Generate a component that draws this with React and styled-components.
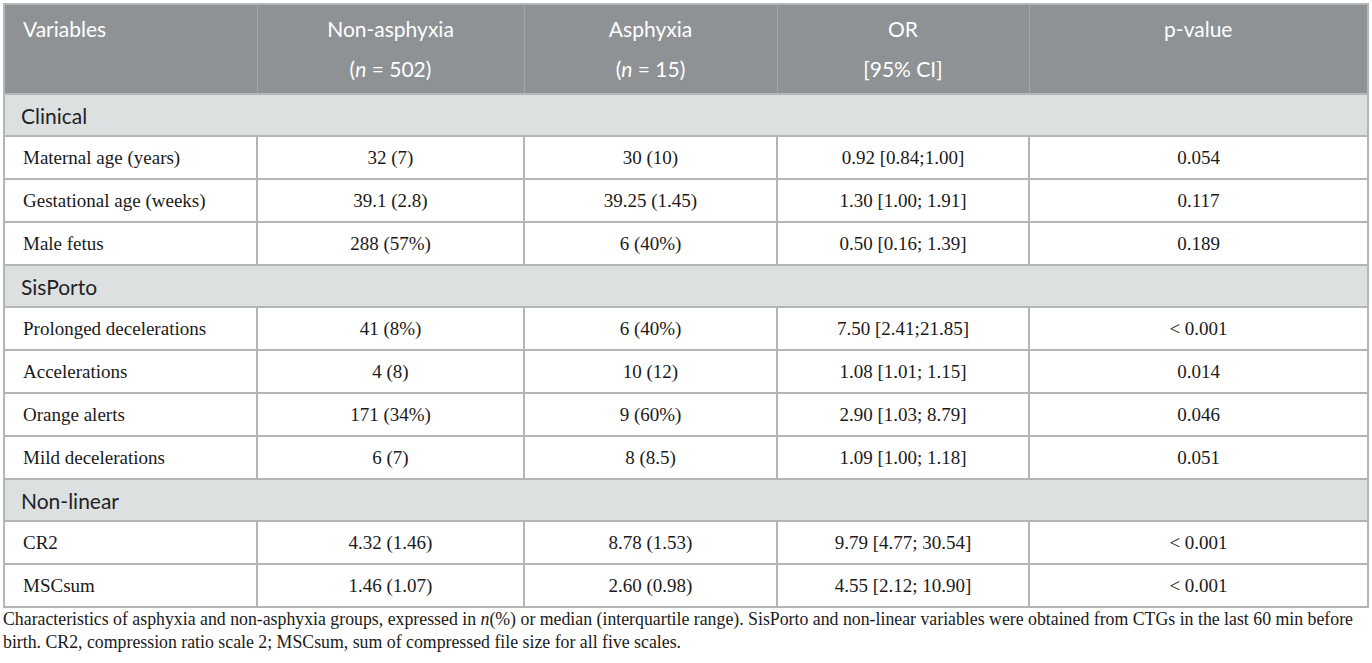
import React from "react";
import styled, { createGlobalStyle } from "styled-components";

const Global = createGlobalStyle`
  html, body { margin: 0; padding: 0; background: #ffffff; }
  body { width: 1372px; height: 663px; overflow: hidden; }
`;

const Page = styled.div`
  padding: 3px 5px 0 3px;
  display: flex;
  flex-direction: column;
`;

const Table = styled.table`
  border-collapse: collapse;
  table-layout: fixed;
  width: 1364px;
  border: 2px solid #b3b6b8;
`;

const HeadCell = styled.th`
  background: #8e9295;
  color: #ffffff;
  font-family: Lato, "Open Sans", sans-serif;
  font-weight: 400;
  font-size: 21px;
  line-height: 40px;
  padding: 4px 18px;
  text-align: ${(p) => (p.$left ? "left" : "center")};
  vertical-align: top;
  border-left: 1px solid #a3a7a9;
  height: 80px;
  &:first-child { border-left: none; }
`;

const SectionCell = styled.td`
  background: #dde0e1;
  color: #1f2224;
  font-family: Lato, "Open Sans", sans-serif;
  font-size: 21px;
  height: 40px;
  padding: 0 16px;
  border-top: 2px solid #b3b6b8;
  border-bottom: 2px solid #b3b6b8;
  text-align: left;
  vertical-align: middle;
`;

const Cell = styled.td`
  font-family: "Liberation Serif", "Times New Roman", serif;
  font-size: 19px;
  color: #1a1a1a;
  height: 41px;
  padding: 0 18px;
  text-align: ${(p) => (p.$left ? "left" : "center")};
  vertical-align: middle;
  border: 2px solid #b3b6b8;
`;

const Caption = styled.p`
  margin: 0;
  font-family: "Liberation Serif", "Times New Roman", serif;
  font-size: 17.8px;
  line-height: 23px;
  color: #1a1a1a;
  width: 1368px;
`;

const sections = [
  {
    title: "Clinical",
    rows: [
      ["Maternal age (years)", "32 (7)", "30 (10)", "0.92 [0.84;1.00]", "0.054"],
      ["Gestational age (weeks)", "39.1 (2.8)", "39.25 (1.45)", "1.30 [1.00; 1.91]", "0.117"],
      ["Male fetus", "288 (57%)", "6 (40%)", "0.50 [0.16; 1.39]", "0.189"],
    ],
  },
  {
    title: "SisPorto",
    rows: [
      ["Prolonged decelerations", "41 (8%)", "6 (40%)", "7.50 [2.41;21.85]", "< 0.001"],
      ["Accelerations", "4 (8)", "10 (12)", "1.08 [1.01; 1.15]", "0.014"],
      ["Orange alerts", "171 (34%)", "9 (60%)", "2.90 [1.03; 8.79]", "0.046"],
      ["Mild decelerations", "6 (7)", "8 (8.5)", "1.09 [1.00; 1.18]", "0.051"],
    ],
  },
  {
    title: "Non-linear",
    rows: [
      ["CR2", "4.32 (1.46)", "8.78 (1.53)", "9.79 [4.77; 30.54]", "< 0.001"],
      ["MSCsum", "1.46 (1.07)", "2.60 (0.98)", "4.55 [2.12; 10.90]", "< 0.001"],
    ],
  },
];

export default function App() {
  return (
    <>
      <Global />
      <Page>
        <Table>
          <colgroup>
            <col style={{ width: 253 }} />
            <col style={{ width: 267 }} />
            <col style={{ width: 253 }} />
            <col style={{ width: 252 }} />
            <col style={{ width: 339 }} />
          </colgroup>
          <thead>
            <tr>
              <HeadCell $left>Variables</HeadCell>
              <HeadCell>
                Non-asphyxia
                <br />(<i>n</i> = 502)
              </HeadCell>
              <HeadCell>
                Asphyxia
                <br />(<i>n</i> = 15)
              </HeadCell>
              <HeadCell>
                OR
                <br />[95% CI]
              </HeadCell>
              <HeadCell>p-value</HeadCell>
            </tr>
          </thead>
          <tbody>
            {sections.map((s) => (
              <React.Fragment key={s.title}>
                <tr>
                  <SectionCell colSpan={5}>{s.title}</SectionCell>
                </tr>
                {s.rows.map((r) => (
                  <tr key={r[0]}>
                    {r.map((c, i) => (
                      <Cell key={i} $left={i === 0}>
                        {c}
                      </Cell>
                    ))}
                  </tr>
                ))}
              </React.Fragment>
            ))}
          </tbody>
        </Table>
        <Caption>
          Characteristics of asphyxia and non-asphyxia groups, expressed in <i>n</i>(%) or median
          (interquartile range). SisPorto and non-linear variables were obtained from CTGs in the
          last 60 min before birth. CR2, compression ratio scale 2; MSCsum, sum of compressed file
          size for all five scales.
        </Caption>
      </Page>
    </>
  );
}
